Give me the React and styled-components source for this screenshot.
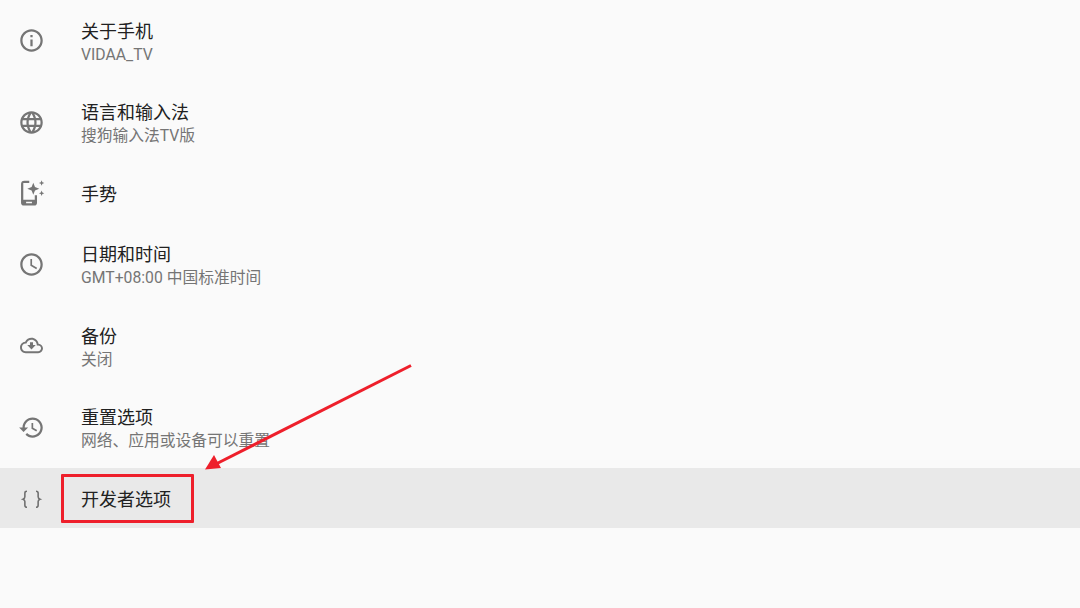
import React from "react";
import styled, { createGlobalStyle } from "styled-components";

const Global = createGlobalStyle`
  html, body { margin: 0; padding: 0; background: #fafafa; }
  body { font-family: Roboto, "Noto Sans CJK SC", sans-serif; }
`;

const Page = styled.div`
  position: relative;
  width: 1080px;
  height: 608px;
  overflow: hidden;
  background: #fafafa;
`;

const List = styled.ul`
  list-style: none;
  margin: 0;
  padding: 0;
  display: flex;
  flex-direction: column;
`;

const Row = styled.li`
  display: flex;
  align-items: center;
  height: ${(p) => (p.$tall ? "81.4px" : "60.75px")};
  padding-left: 18px;
  background: ${(p) => (p.$active ? "#e9e9e9" : "transparent")};
`;

const IconSlot = styled.svg`
  width: 27px;
  height: 27px;
  flex: none;
  margin-right: 36px;
  fill: #757575;
`;

const Texts = styled.div`
  display: flex;
  flex-direction: column;
  padding-top: 3px;
`;

const Title = styled.div`
  font-size: 18px;
  line-height: 23px;
  color: #212121;
`;

const Subtitle = styled.div`
  font-size: 15.75px;
  line-height: 23px;
  margin-bottom: -1px;
  color: #757575;
`;

const Highlight = styled.div`
  position: absolute;
  left: 61px;
  top: 474px;
  width: 133px;
  height: 49px;
  box-sizing: border-box;
  border: 3px solid #ee1f2b;
  border-radius: 1px;
`;

const Arrow = styled.svg`
  position: absolute;
  left: 200px;
  top: 360px;
  width: 220px;
  height: 115px;
`;

const icons = {
  info: (
    <path d="M11 7h2v2h-2zm0 4h2v6h-2zm1-9C6.48 2 2 6.48 2 12s4.48 10 10 10 10-4.48 10-10S17.52 2 12 2zm0 18c-4.41 0-8-3.59-8-8s3.59-8 8-8 8 3.59 8 8-3.59 8-8 8z" />
  ),
  language: (
    <path d="M11.99 2C6.47 2 2 6.48 2 12s4.47 10 9.99 10C17.52 22 22 17.52 22 12S17.52 2 11.99 2zm6.93 6h-2.95c-.32-1.25-.78-2.45-1.38-3.56 1.84.63 3.37 1.91 4.33 3.56zM12 4.04c.83 1.2 1.48 2.53 1.91 3.96h-3.82c.43-1.43 1.08-2.76 1.91-3.96zM4.26 14C4.1 13.36 4 12.69 4 12s.1-1.36.26-2h3.38c-.08.66-.14 1.32-.14 2 0 .68.06 1.34.14 2H4.26zm.82 2h2.95c.32 1.25.78 2.45 1.38 3.56-1.84-.63-3.37-1.9-4.33-3.56zm2.95-8H5.08c.96-1.66 2.49-2.93 4.33-3.56C8.81 5.55 8.35 6.75 8.03 8zM12 19.96c-.83-1.2-1.48-2.53-1.91-3.96h3.82c-.43 1.43-1.08 2.76-1.91 3.96zM14.34 14H9.66c-.09-.66-.16-1.32-.16-2 0-.68.07-1.35.16-2h4.68c.09.65.16 1.32.16 2 0 .68-.07 1.34-.16 2zm.25 5.56c.6-1.11 1.06-2.31 1.38-3.56h2.95c-.96 1.65-2.49 2.93-4.33 3.56zM16.36 14c.08-.66.14-1.32.14-2 0-.68-.06-1.34-.14-2h3.38c.16.64.26 1.31.26 2s-.1 1.36-.26 2h-3.38z" />
  ),
  gesture: (
    <>
      <path
        fillRule="evenodd"
        d="M5.7.6H10v2H4.7v15H14.9v-4h2v6.6a2.5 2.5 0 0 1-2.5 2.5H5.2a2.5 2.5 0 0 1-2.5-2.5V3.6a3 3 0 0 1 3-3zM7.2 19.4v1.3h5.2v-1.3z"
      />
      <path d="M13.6 2.4l1.5 3.9 3.8 1.5-3.8 1.5-1.5 3.9-1.5-3.9-3.8-1.5 3.8-1.5z" />
      <path d="M21 .2l.7 1.7 1.7.7-1.7.7-.7 1.7-.7-1.7-1.7-.7 1.7-.7z" />
      <path d="M21 9.4l.7 1.7 1.7.7-1.7.7-.7 1.7-.7-1.7-1.7-.7 1.7-.7z" />
    </>
  ),
  schedule: (
    <path d="M11.99 2C6.47 2 2 6.48 2 12s4.47 10 9.99 10C17.52 22 22 17.52 22 12S17.52 2 11.99 2zM12 20c-4.42 0-8-3.58-8-8s3.58-8 8-8 8 3.58 8 8-3.58 8-8 8zM12.5 7H11v6l5.25 3.15.75-1.23-4.5-2.67z" />
  ),
  backup: (
    <path
      transform="translate(1.8 1.8) scale(.85)"
      d="M19.35 10.04C18.67 6.59 15.64 4 12 4 9.11 4 6.6 5.64 5.35 8.04 2.34 8.36 0 10.91 0 14c0 3.31 2.69 6 6 6h13c2.76 0 5-2.24 5-5 0-2.64-2.05-4.78-4.65-4.96zM19 18H6c-2.21 0-4-1.79-4-4s1.79-4 4-4h.71C7.37 7.69 9.48 6 12 6c3.04 0 5.5 2.46 5.5 5.5v.5H19c1.66 0 3 1.34 3 3s-1.34 3-3 3zM13.6 8.5h-3.2V11.5H7.6l4.4 4.6 4.4-4.6h-2.8z"
    />
  ),
  history: (
    <path d="M13 3c-4.97 0-9 4.03-9 9H1l3.89 3.89.07.14L9 12H6c0-3.87 3.13-7 7-7s7 3.13 7 7-3.13 7-7 7c-1.93 0-3.68-.79-4.94-2.06l-1.42 1.42C8.27 19.99 10.51 21 13 21c4.97 0 9-4.03 9-9s-4.03-9-9-9zm-1 5v5l4.28 2.54.72-1.21-3.5-2.08V8H12z" />
  ),
  code: (
    <g fill="none" stroke="#6f6f6f" strokeWidth="1.4">
      <path d="M8 5.5c-1.4 0-1.9.5-1.9 1.8v3.2c0 1.1-.5 1.7-1.6 2.1 1.1.4 1.6 1 1.6 2.1v3.2c0 1.3.5 1.8 1.9 1.8" />
      <path d="M16 5.5c1.4 0 1.9.5 1.9 1.8v3.2c0 1.1.5 1.7 1.6 2.1-1.1.4-1.6 1-1.6 2.1v3.2c0 1.3-.5 1.8-1.9 1.8" />
    </g>
  ),
};

const items = [
  { icon: "info", title: "关于手机", sub: "VIDAA_TV" },
  { icon: "language", title: "语言和输入法", sub: "搜狗输入法TV版" },
  { icon: "gesture", title: "手势" },
  { icon: "schedule", title: "日期和时间", sub: "GMT+08:00 中国标准时间" },
  { icon: "backup", title: "备份", sub: "关闭" },
  { icon: "history", title: "重置选项", sub: "网络、应用或设备可以重置" },
  { icon: "code", title: "开发者选项", active: true },
];

export default function App() {
  return (
    <Page>
      <Global />
      <List>
        {items.map((it) => (
          <Row key={it.title} $tall={!!it.sub} $active={it.active}>
            <IconSlot viewBox="0 0 24 24">{icons[it.icon]}</IconSlot>
            <Texts>
              <Title>{it.title}</Title>
              {it.sub && <Subtitle>{it.sub}</Subtitle>}
            </Texts>
          </Row>
        ))}
      </List>
      <Highlight />
      <Arrow viewBox="0 0 220 115">
        <line x1="211" y1="5.5" x2="16" y2="104" stroke="#ee1f2b" strokeWidth="3" />
        <path d="M5 109.5 L14 95 L21 108 Z" fill="#ee1f2b" />
      </Arrow>
    </Page>
  );
}
